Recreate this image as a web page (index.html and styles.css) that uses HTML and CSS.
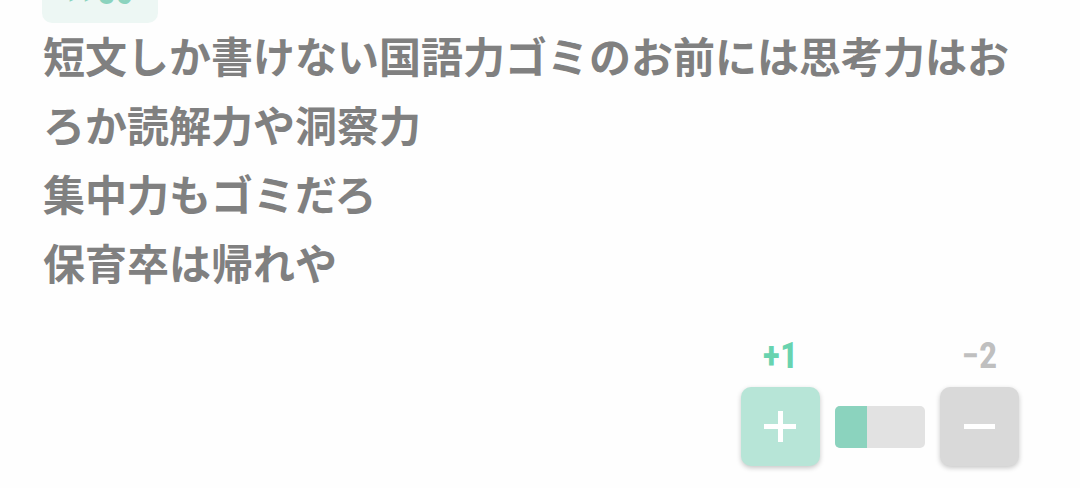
FILE: index.html
```
<!DOCTYPE html>
<html lang="ja">
<head>
<meta charset="utf-8">
<title>コメント</title>
<link rel="stylesheet" href="styles.css">
</head>
<body>
<article class="comment">
  <a class="reply" href="#c36">&gt;&gt;36</a>
  <p class="text">短文しか書けない国語力ゴミのお前には思考力はおろか読解力や洞察力<br>集中力もゴミだろ<br>保育卒は帰れや</p>
  <div class="votes">
    <div class="vote">
      <span class="count count-up" id="up">+1</span>
      <button class="button button-up" type="button" aria-label="賛成" aria-describedby="up">
        <svg class="icon" viewBox="0 0 33 33"><path d="M0 16.500H32M16.500 1V32" stroke="currentColor" stroke-width="5"/></svg>
      </button>
    </div>
    <div class="ratio"><div class="ratio-up"></div></div>
    <div class="vote">
      <span class="count count-down" id="down">−2</span>
      <button class="button button-down" type="button" aria-label="反対" aria-describedby="down">
        <svg class="icon" viewBox="0 0 33 33"><path d="M1 16.500H32" stroke="currentColor" stroke-width="5"/></svg>
      </button>
    </div>
  </div>
</article>
</body>
</html>
```
FILE: styles.css
```
body {
  margin: 0;
  background: #fefefe;
}
.comment {
  display: flex;
  flex-direction: column;
  align-items: flex-start;
  margin-top: -41px;
  padding: 0 61px 22px 42px;
}
.reply {
  box-sizing: border-box;
  min-width: 116px;
  padding: 9px 24px 7px;
  border-radius: 10px;
  background: #edf7f4;
  color: #8bd3be;
  font: bold 34px/48px "Roboto Condensed", "Noto Sans CJK JP", sans-serif;
  text-align: center;
  text-decoration: none;
}
.text {
  margin: -3px 0 0;
  padding-left: 1px;
  color: #808080;
  font: bold 42px/69px "Noto Sans CJK JP", sans-serif;
}
.votes {
  display: flex;
  align-items: flex-end;
  align-self: flex-end;
  gap: 15px;
  margin-top: 39px;
}
.vote {
  display: flex;
  flex-direction: column;
  align-items: center;
  gap: 9px;
}
.count {
  font: bold 36px/43px "Roboto Condensed", "Noto Sans CJK JP", sans-serif;
}
.count-up {
  color: #68d3af;
}
.count-down {
  color: #bfbfbf;
}
.button {
  display: grid;
  place-items: center;
  width: 79px;
  height: 79px;
  padding: 0;
  border: 0;
  border-radius: 10px;
  box-shadow: 0 2px 5px rgba(0, 0, 0, 0.22);
  color: #fff;
}
.button-up {
  background: #b7e5d7;
}
.button-down {
  background: #d9d9d9;
}
.icon {
  width: 33px;
  height: 33px;
}
.ratio {
  width: 90px;
  height: 42px;
  margin-bottom: 18px;
  border-radius: 5px;
  background: #e2e2e2;
  overflow: hidden;
}
.ratio-up {
  width: 36%;
  height: 100%;
  background: #8bd3be;
}
```
